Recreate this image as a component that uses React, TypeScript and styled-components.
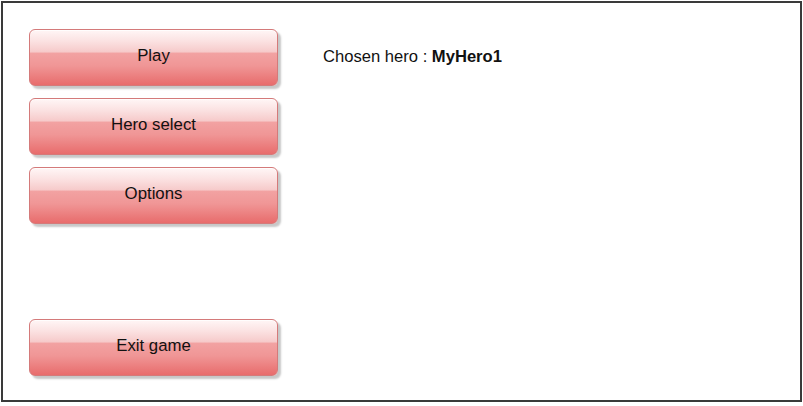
import React from "react";
import styled, { createGlobalStyle } from "styled-components";

const GlobalStyle = createGlobalStyle`
  html, body {
    margin: 0;
    padding: 0;
    background: #ffffff;
  }
  body {
    font-family: "Liberation Sans", Arial, Helvetica, sans-serif;
    color: #111111;
  }
`

const Frame = styled.div`
  box-sizing: border-box;
  width: 801px;
  height: 401px;
  margin: 1px 0 0 1px;
  border: 2px solid #3a3a3a;
  display: flex;
  gap: 45px;
  padding: 26px 26px 24px 26px;
`

const Menu = styled.div`
  display: flex;
  flex-direction: column;
  gap: 12px;
  width: 249px;
`

const MenuButton = styled.button<{ $pushDown?: boolean }>`
  box-sizing: border-box;
  height: 57px;
  width: 100%;
  margin-top: ${({ $pushDown }) => ($pushDown ? "83px" : "0")};
  border: 1px solid #d47a7a;
  border-radius: 6px;
  font-family: "Liberation Sans", Arial, Helvetica, sans-serif;
  font-size: 16.8px;
  color: #111111;
  padding: 0 0 3px;
  cursor: pointer;
  background: linear-gradient(
    to bottom,
    #fff6f6 0%,
    #fbe2e2 20%,
    #f6caca 40%,
    #f2a2a2 42%,
    #f09696 65%,
    #e86c6c 100%
  );
  box-shadow: 3px 3px 2px rgba(0, 0, 0, 0.22), inset 0 1px 0 rgba(255, 255, 255, 0.8);
`

const Content = styled.div`
  padding-top: 18px;
  font-size: 16.6px;
`

const HeroName = styled.b`
  font-weight: bold;
`

const App: React.FC = () => {
  return (
    <>
      <GlobalStyle />
      <Frame>
        <Menu>
          <MenuButton>Play</MenuButton>
          <MenuButton>Hero select</MenuButton>
          <MenuButton>Options</MenuButton>
          <MenuButton $pushDown>Exit game</MenuButton>
        </Menu>
        <Content>
          Chosen hero : <HeroName>MyHero1</HeroName>
        </Content>
      </Frame>
    </>
  );
}
export default App;
